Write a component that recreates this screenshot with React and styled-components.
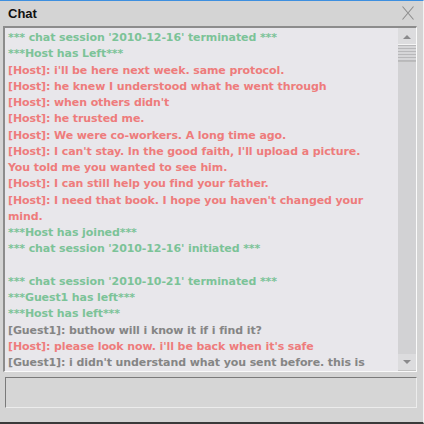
import React from 'react';
import styled, { createGlobalStyle } from 'styled-components';

const GlobalStyle = createGlobalStyle`
  html, body {
    margin: 0;
    padding: 0;
    background: #d4d4d4;
  }
`;

const GREEN = '#7cc398';
const RED = '#ee7c7c';
const GRAY = '#858585';

const lines = [
  { kind: 'sys', text: "*** chat session '2010-12-16' terminated ***" },
  { kind: 'sys', text: '***Host has Left***' },
  { kind: 'host', text: "[Host]: i'll be here next week. same protocol." },
  { kind: 'host', text: '[Host]: he knew I understood what he went through' },
  { kind: 'host', text: "[Host]: when others didn't" },
  { kind: 'host', text: '[Host]: he trusted me.' },
  { kind: 'host', text: '[Host]: We were co-workers. A long time ago.' },
  { kind: 'host', text: "[Host]: I can't stay. In the good faith, I'll upload a picture. You told me you wanted to see him." },
  { kind: 'host', text: '[Host]: I can still help you find your father.' },
  { kind: 'host', text: "[Host]: I need that book. I hope you haven't changed your mind." },
  { kind: 'sys', text: '***Host has joined***' },
  { kind: 'sys', text: "*** chat session '2010-12-16' initiated ***" },
  { kind: 'sys', text: '' },
  { kind: 'sys', text: "*** chat session '2010-10-21' terminated ***" },
  { kind: 'sys', text: '***Guest1 has left***' },
  { kind: 'sys', text: '***Host has left***' },
  { kind: 'guest', text: '[Guest1]: buthow will i know it if i find it?' },
  { kind: 'host', text: "[Host]: please look now. i'll be back when it's safe" },
  { kind: 'guest', text: "[Guest1]: i didn't understand what you sent before. this is" },
];

const colors = { sys: GREEN, host: RED, guest: GRAY };

const Window = styled.div`
  width: 424px;
  height: 424px;
  box-sizing: border-box;
  background: #d4d4d4;
  border-top: 1px solid #3d8fdf;
  border-bottom: 2px solid #3a3a3a;
  border-right: 1px solid #f2f2f2;
  display: flex;
  flex-direction: column;
  font-family: 'DejaVu Sans', Verdana, sans-serif;
`;

const TitleBar = styled.div`
  height: 25px;
  display: flex;
  align-items: center;
  justify-content: space-between;
  padding: 0 9px 0 8px;
`;

const Title = styled.div`
  font-family: 'Liberation Sans', Arial, sans-serif;
  font-weight: bold;
  font-size: 13px;
  color: #111;
`;

const CloseButton = styled.div`
  width: 12px;
  height: 14px;
  margin-top: -2px;
  display: flex;
`;

const LogBox = styled.div`
  margin: 0 6px 0 3px;
  height: 346px;
  box-sizing: border-box;
  display: flex;
  background: #e8e7eb;
  border-top: 2px solid #8c8c8c;
  border-left: 2px solid #8c8c8c;
  border-bottom: 1px solid #fafafa;
  border-right: 1px solid #fafafa;
`;

const LogText = styled.div`
  flex: 1;
  overflow: hidden;
  padding: 2px 24px 0 3px;
  font-size: 11px;
  font-weight: bold;
  letter-spacing: -0.1px;
  line-height: 16.25px;
`;

const Line = styled.div`
  color: ${(p) => colors[p.$kind]};
  min-height: 16.25px;
  white-space: pre-wrap;
`;

const ScrollBar = styled.div`
  width: 18px;
  display: flex;
  flex-direction: column;
  background: #d2d2d4;
`;

const ArrowButton = styled.div`
  height: 17px;
  box-sizing: border-box;
  background: #dcdcde;
  border-bottom: 1px solid ${(p) => (p.$up ? '#f4f4f4' : '#c4c4c4')};
  display: flex;
  align-items: center;
  justify-content: center;
`;

const Thumb = styled.div`
  height: 17px;
  box-sizing: border-box;
  background: repeating-linear-gradient(
    to bottom,
    #b8b8ba 0px,
    #b8b8ba 1px,
    #d6d6d8 1px,
    #d6d6d8 3px
  );
  border-bottom: 1px solid #bcbcbc;
`;

const Track = styled.div`
  flex: 1;
`;

const InputBox = styled.div`
  margin: 5px 6px 0 5px;
  height: 31px;
  box-sizing: border-box;
  background: #d6d6d6;
  border-top: 1px solid #7a7a7a;
  border-left: 1px solid #7a7a7a;
  border-bottom: 1px solid #ececec;
  border-right: 1px solid #ececec;
`;

const Arrow = ({ up }) => (
  <svg width="8" height="5" viewBox="0 0 8 5">
    <path d={up ? 'M0 5 L4 1 L8 5 Z' : 'M0 0 L4 4 L8 0 Z'} fill="#8a8a8c" />
  </svg>
);

export default function App() {
  return (
    <>
      <GlobalStyle />
      <Window>
        <TitleBar>
          <Title>Chat</Title>
          <CloseButton>
            <svg width="12" height="14" viewBox="0 0 12 14">
              <path d="M0.5 0.5 L11.5 13.5 M11.5 0.5 L0.5 13.5" stroke="#8e8e8e" strokeWidth="1.1" fill="none" />
            </svg>
          </CloseButton>
        </TitleBar>
        <LogBox>
          <LogText>
            {lines.map((l, i) => (
              <Line key={i} $kind={l.kind}>
                {l.text}
              </Line>
            ))}
          </LogText>
          <ScrollBar>
            <ArrowButton $up>
              <Arrow up />
            </ArrowButton>
            <Thumb />
            <Track />
            <ArrowButton>
              <Arrow />
            </ArrowButton>
          </ScrollBar>
        </LogBox>
        <InputBox />
      </Window>
    </>
  );
}
